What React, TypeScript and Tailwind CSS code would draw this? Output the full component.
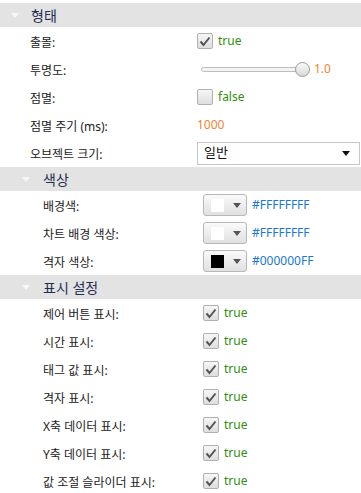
const font = { fontFamily: '"Noto Sans", "Noto Sans CJK KR", sans-serif' };

const Arrow = ({ className }: { className: string }) => (
  <svg width="8" height="5" viewBox="0 0 8 5" className={className}>
    <path d="M0 0 L8 0 L4 5 Z" fill="currentColor" />
  </svg>
);

const Header = ({ title, nested }: { title: string; nested?: boolean }) => (
  <div className="flex h-6 items-center bg-[#e3e3e3]">
    <Arrow className={nested ? "ml-[22px] text-[#f7f7f7]" : "ml-[11px] text-[#f7f7f7]"} />
    <span className={(nested ? "ml-[13px]" : "ml-[12px]") + " text-[14px] text-[#1f2f52]"}>{title}</span>
  </div>
);

const Row = ({ label, nested, children }: { label: string; nested?: boolean; children?: React.ReactNode }) => (
  <div className="flex h-7 items-center">
    <div className={nested ? "w-[203px] pl-[43px]" : "w-[197px] pl-[30px]"}>
      <span className="text-[12px] text-[#222]">{label}</span>
    </div>
    <div className="flex flex-1 items-center">{children}</div>
  </div>
);

const Check = ({ checked }: { checked: boolean }) => (
  <div className="flex items-center">
    <div className="flex h-4 w-4 items-center justify-center rounded-[2px] border border-[#b0b0b0] bg-gradient-to-b from-[#f6f6f6] to-[#dedede]">
      {checked && (
        <svg width="12" height="11" viewBox="0 0 12 11">
          <path d="M1.5 5.5 L4.5 9 L10.5 1.5" fill="none" stroke="#555" strokeWidth="2" />
        </svg>
      )}
    </div>
    <span className="ml-[5px] text-[12px] text-[#2f8f10]">{checked ? "true" : "false"}</span>
  </div>
);

const ColorPick = ({ color, hex }: { color: string; hex: string }) => (
  <div className="flex items-center">
    <div className="flex h-[22px] w-[44px] items-center rounded-[3px] border border-[#b8b8b8] bg-gradient-to-b from-[#fafafa] to-[#e0e0e0]">
      <div className="ml-[7px] h-[13px] w-[13px]" style={{ background: color }} />
      <Arrow className="ml-[9px] text-[#555]" />
    </div>
    <span className="ml-[5px] text-[12px] text-[#1a78d2]">{hex}</span>
  </div>
);

export default function App() {
  return (
    <div className="h-[493px] w-[361px] overflow-hidden bg-white pt-[3px]" style={font}>
      <Header title="형태" />
      <Row label="출몰:">
        <Check checked />
      </Row>
      <Row label="투명도:">
        <div className="relative ml-[4px] flex h-4 w-[109px] items-center">
          <div className="h-[5px] w-full rounded-full border border-[#bdbdbd] bg-[#f4f4f4]" />
          <div className="absolute left-[94px] h-[15px] w-[15px] rounded-full border border-[#9a9a9a] bg-gradient-to-b from-[#fbfbfb] to-[#d8d8d8]" />
        </div>
        <span className="ml-[4px] text-[12px] text-[#f08434]">1.0</span>
      </Row>
      <Row label="점멸:">
        <Check checked={false} />
      </Row>
      <Row label="점멸 주기 (ms):">
        <span className="text-[12px] text-[#f08434]">1000</span>
      </Row>
      <Row label="오브젝트 크기:">
        <div className="flex h-[23px] w-[163px] items-center justify-between border border-[#c8c8c8] pl-[6px] pr-[9px]">
          <span className="text-[13px] text-[#111]">일반</span>
          <Arrow className="text-[#111]" />
        </div>
      </Row>
      <Header title="색상" nested />
      <Row label="배경색:" nested>
        <ColorPick color="#ffffff" hex="#FFFFFFFF" />
      </Row>
      <Row label="차트 배경 색상:" nested>
        <ColorPick color="#ffffff" hex="#FFFFFFFF" />
      </Row>
      <Row label="격자 색상:" nested>
        <ColorPick color="#000000" hex="#000000FF" />
      </Row>
      <Header title="표시 설정" nested />
      {["제어 버튼 표시:", "시간 표시:", "태그 값 표시:", "격자 표시:", "X축 데이터 표시:", "Y축 데이터 표시:", "값 조절 슬라이더 표시:"].map((l) => (
        <Row key={l} label={l} nested>
          <Check checked />
        </Row>
      ))}
    </div>
  );
}
